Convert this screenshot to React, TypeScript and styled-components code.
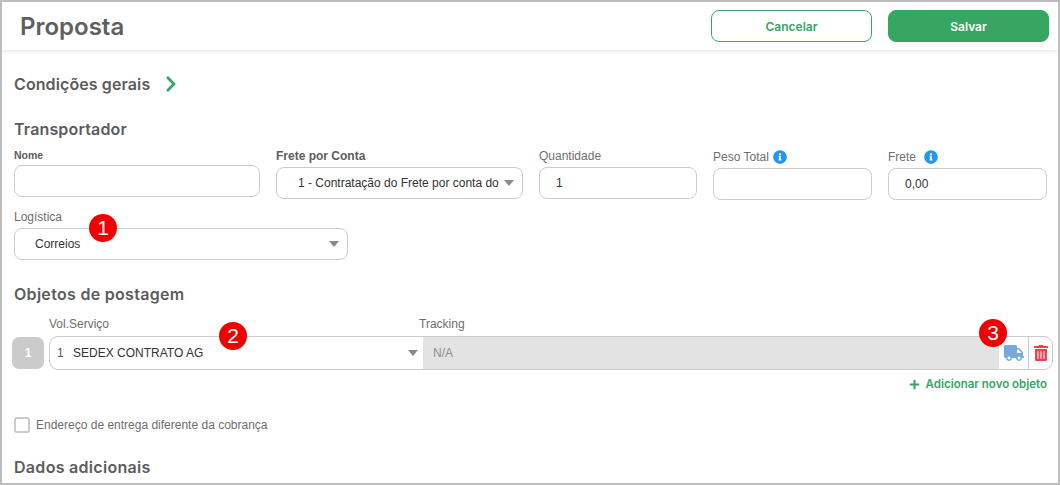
import React from "react";
import styled, { createGlobalStyle } from "styled-components";
import { FaInfoCircle, FaPlus, FaTruck, FaTrashAlt, FaChevronRight } from "react-icons/fa";

const GlobalStyle = createGlobalStyle`
  html, body {
    margin: 0;
    padding: 0;
    background: #fff;
  }
  * {
    box-sizing: border-box;
  }
`;

const Marker = ({ n, x, y }: { n: number; x: number; y: number }) => (
  <Badge style={{ left: x, top: y }}>{n}</Badge>
);

const App = () => {
  return (
    <Frame>
      <GlobalStyle />
      <Header>
        <Title>Proposta</Title>
        <Actions>
          <Button>Cancelar</Button>
          <Button primary>Salvar</Button>
        </Actions>
      </Header>
      <Content>
        <General>
          <GeneralTitle>Condições gerais</GeneralTitle>
          <FaChevronRight size={18} color="#2fa866" />
        </General>
        <Transport>Transportador</Transport>
        <FieldRow>
          <Field width={246} top={0} gap={4}>
            <Label bold>Nome</Label>
            <Box />
          </Field>
          <Field width={247} top={1} gap={5}>
            <Label strong>Frete por Conta</Label>
            <Box>
              <BoxText indent={21}>1 - Contratação do Frete por conta do</BoxText>
              <Caret />
            </Box>
          </Field>
          <Field width={158} top={1} gap={5}>
            <Label>Quantidade</Label>
            <Box>
              <BoxText indent={16}>1</BoxText>
            </Box>
          </Field>
          <Field width={159} top={2} gap={5}>
            <Label>
              Peso Total <FaInfoCircle size={14} color="#2196f3" />
            </Label>
            <Box />
          </Field>
          <Field width={159} top={2} gap={5}>
            <Label>
              Frete <LabelSpacer /> <FaInfoCircle size={14} color="#2196f3" />
            </Label>
            <Box>
              <BoxText indent={16}>0,00</BoxText>
            </Box>
          </Field>
        </FieldRow>
        <Logistics>
          <Label>Logística</Label>
          <Box>
            <BoxText indent={20}>Correios</BoxText>
            <Caret />
          </Box>
        </Logistics>
        <ObjectsTitle>Objetos de postagem</ObjectsTitle>
        <ColumnLabels>
          <Label>Vol.Serviço</Label>
          <Label>Tracking</Label>
        </ColumnLabels>
        <ObjectRow>
          <IndexTag>1</IndexTag>
          <ObjectGroup>
            <ServiceCell>
              <ServiceNumber>1</ServiceNumber>
              <BoxText indent={0}>SEDEX CONTRATO AG</BoxText>
              <Caret />
            </ServiceCell>
            <TrackingCell>N/A</TrackingCell>
            <IconCell width={30}>
              <FaTruck size={20} color="#76a9dc" />
            </IconCell>
            <IconCell width={23} last>
              <FaTrashAlt size={16} color="#f0404f" />
            </IconCell>
          </ObjectGroup>
        </ObjectRow>
        <AddRow>
          <FaPlus size={11} />
          Adicionar novo objeto
        </AddRow>
        <CheckRow>
          <CheckBox />
          <CheckLabel>Endereço de entrega diferente da cobrança</CheckLabel>
        </CheckRow>
        <Extra>Dados adicionais</Extra>
      </Content>
      <Marker n={1} x={87} y={212} />
      <Marker n={2} x={217} y={320} />
      <Marker n={3} x={977} y={317} />
    </Frame>
  );
};

// Styled Components

const Frame = styled.div`
  position: relative;
  width: 1060px;
  height: 485px;
  overflow: hidden;
  border: 2px solid #bdbdbd;
  background: #fff;
  font-family: "Liberation Sans", Arial, sans-serif;
`;

const Header = styled.header`
  display: flex;
  align-items: center;
  justify-content: space-between;
  height: 48px;
  padding: 0 9px 0 18px;
  box-shadow: 0 1px 5px rgba(0, 0, 0, 0.12);
`;

const Title = styled.h1`
  margin: 0;
  font-family: Inter, sans-serif;
  font-size: 24px;
  font-weight: 600;
  color: #5f5f5f;
`;

const Actions = styled.div`
  display: flex;
  gap: 16px;
`;

const Button = styled.button<{ primary?: boolean }>`
  width: 161px;
  height: 32px;
  padding: 0;
  border: 1px solid #38a663;
  border-radius: 8px;
  background: ${(p) => (p.primary ? "#38a663" : "#fff")};
  color: ${(p) => (p.primary ? "#fff" : "#38a663")};
  font-family: Inter, sans-serif;
  font-size: 12px;
  font-weight: 600;
`;

const Content = styled.main`
  padding: 0 5px 0 12px;
`;

const SectionTitle = styled.h2`
  margin: 0;
  font-family: Inter, sans-serif;
  font-size: 16px;
  font-weight: 600;
  letter-spacing: 0.3px;
  color: #5c5c5c;
`;

const General = styled.div`
  display: flex;
  align-items: center;
  gap: 12px;
  height: 20px;
  margin-top: 24px;
`;

const GeneralTitle = styled(SectionTitle)`
  letter-spacing: 0.1px;
`;

const Transport = styled(SectionTitle)`
  margin-top: 26px;
  line-height: 18px;
  letter-spacing: 0.15px;
`;

const ObjectsTitle = styled(SectionTitle)`
  margin-top: 25px;
  line-height: 18px;
`;

const Extra = styled(SectionTitle)`
  margin-top: 25px;
  line-height: 18px;
`;

const FieldRow = styled.div`
  display: flex;
  gap: 16px;
  margin-top: 10px;
`;

const Field = styled.div<{ width: number; top: number; gap: number }>`
  display: flex;
  flex-direction: column;
  gap: ${(p) => p.gap}px;
  flex: none;
  width: ${(p) => p.width}px;
  margin-top: ${(p) => p.top}px;
`;

const Label = styled.label<{ bold?: boolean; strong?: boolean }>`
  display: flex;
  align-items: center;
  gap: 4px;
  height: 13px;
  font-size: ${(p) => (p.bold ? "10.5px" : "12px")};
  font-weight: ${(p) => (p.bold || p.strong ? 700 : 400)};
  color: ${(p) => (p.strong || p.bold ? "#5c5c5c" : "#6e6e6e")};
`;

const LabelSpacer = styled.span`
  width: 0;
`;

const Box = styled.div`
  display: flex;
  align-items: center;
  height: 32px;
  padding-right: 8px;
  border: 1px solid #cbcbcb;
  border-radius: 8px;
  background: #fff;
`;

const BoxText = styled.span<{ indent: number }>`
  flex: 1;
  padding-left: ${(p) => p.indent}px;
  font-size: 12px;
  color: #333;
  white-space: nowrap;
`;

const Caret = styled.span`
  flex: none;
  width: 0;
  height: 0;
  border-left: 5.5px solid transparent;
  border-right: 5.5px solid transparent;
  border-top: 6px solid #8a8a8a;
`;

const Logistics = styled.div`
  display: flex;
  flex-direction: column;
  gap: 5px;
  width: 334px;
  margin-top: 10px;
`;

const ColumnLabels = styled.div`
  display: grid;
  grid-template-columns: 370px 1fr;
  margin-top: 14px;
  padding-left: 35px;
`;

const ObjectRow = styled.div`
  display: flex;
  align-items: center;
  gap: 5px;
  margin: 6px 0 0 -2px;
  height: 34px;
`;

const IndexTag = styled.div`
  display: flex;
  align-items: center;
  justify-content: center;
  width: 32px;
  height: 32px;
  border-radius: 7px;
  background: #cbcbcb;
  color: #fff;
  font-size: 12px;
  font-weight: 700;
`;

const ObjectGroup = styled.div`
  display: flex;
  width: 1004px;
  height: 34px;
  border: 1px solid #cbcbcb;
  border-radius: 9px;
  overflow: hidden;
`;

const ServiceCell = styled.div`
  display: flex;
  align-items: center;
  width: 373px;
  padding: 0 5px 0 7px;
`;

const ServiceNumber = styled.span`
  width: 16px;
  font-size: 12px;
  color: #555;
`;

const TrackingCell = styled.div`
  flex: 1;
  display: flex;
  align-items: center;
  padding-left: 10px;
  background: #e3e3e3;
  font-size: 12px;
  color: #8e8e8e;
`;

const IconCell = styled.div<{ width: number; last?: boolean }>`
  display: flex;
  align-items: center;
  justify-content: center;
  width: ${(p) => p.width}px;
  border-right: ${(p) => (p.last ? "none" : "1px solid #cbcbcb")};
`;

const AddRow = styled.div`
  display: flex;
  align-items: center;
  justify-content: flex-end;
  gap: 6px;
  height: 14px;
  margin: 7px 6px 0 0;
  font-family: Inter, sans-serif;
  font-size: 11.5px;
  font-weight: 600;
  color: #38a663;
`;

const CheckRow = styled.div`
  display: flex;
  align-items: center;
  gap: 6px;
  margin-top: 26px;
`;

const CheckBox = styled.span`
  width: 16px;
  height: 16px;
  border: 2px solid #cbcbcb;
  border-radius: 3px;
`;

const CheckLabel = styled.span`
  font-size: 12px;
  color: #6e6e6e;
`;

const Badge = styled.div`
  position: absolute;
  display: flex;
  align-items: center;
  justify-content: center;
  width: 28px;
  height: 28px;
  border-radius: 50%;
  background: #f00000;
  color: #fff;
  font-size: 21px;
`;

export default App;
